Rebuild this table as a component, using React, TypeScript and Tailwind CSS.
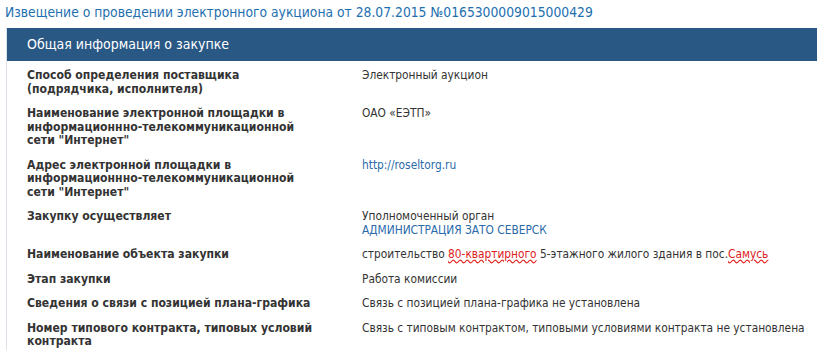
const rows: { label: string; value: React.ReactNode }[] = [
  { label: 'Способ определения поставщика (подрядчика, исполнителя)', value: 'Электронный аукцион' },
  {
    label: 'Наименование электронной площадки в информационнно-телекоммуникационной сети "Интернет"',
    value: 'ОАО «ЕЭТП»',
  },
  {
    label: 'Адрес электронной площадки в информационнно-телекоммуникационной сети "Интернет"',
    value: <span className="text-[#2a6aaa]">http://roseltorg.ru</span>,
  },
  {
    label: 'Закупку осуществляет',
    value: (
      <>
        <div>Уполномоченный орган</div>
        <div className="text-[#2a6aaa]">АДМИНИСТРАЦИЯ ЗАТО СЕВЕРСК</div>
      </>
    ),
  },
  {
    label: 'Наименование объекта закупки',
    value: (
      <>
        строительство{' '}
        <span className="text-[#e0201c] underline decoration-wavy decoration-[#e0201c]">80-квартирного</span> 5-этажного
        жилого здания в пос.
        <span className="text-[#e0201c] underline decoration-wavy decoration-[#e0201c]">Самусь</span>
      </>
    ),
  },
  { label: 'Этап закупки', value: 'Работа комиссии' },
  { label: 'Сведения о связи с позицией плана-графика', value: 'Связь с позицией плана-графика не установлена' },
  {
    label: 'Номер типового контракта, типовых условий контракта',
    value: 'Связь с типовым контрактом, типовыми условиями контракта не установлена',
  },
]

export default function App(): React.JSX.Element {
  return (
    <div className="h-[350px] w-[817px] overflow-hidden bg-white font-['DejaVu_Sans_Condensed','DejaVu_Sans',sans-serif] text-[12px] leading-[13.5px] text-[#333]">
      <h1 className="px-[5px] pt-[4px] text-[13.75px] leading-[17px] text-[#1d6fb0]">
        Извещение о проведении электронного аукциона от 28.07.2015 №0165300009015000429
      </h1>
      <div className="ml-[6px] mt-[7px] border-l border-[#dde2e8]">
        <div className="flex h-[33px] items-center bg-[#2a5885] px-[20px] text-[14px] text-white">
          Общая информация о закупке
        </div>
        <div className="pt-[2.5px]">
          {rows.map((r) => (
            <div key={r.label} className="flex py-[5.5px]">
              <div className="w-[355px] shrink-0 pl-[20px] pr-[46px] font-bold text-[12.1px]">{r.label}</div>
              <div className="flex-1 text-[11.8px]">{r.value}</div>
            </div>
          ))}
        </div>
      </div>
    </div>
  )
}
